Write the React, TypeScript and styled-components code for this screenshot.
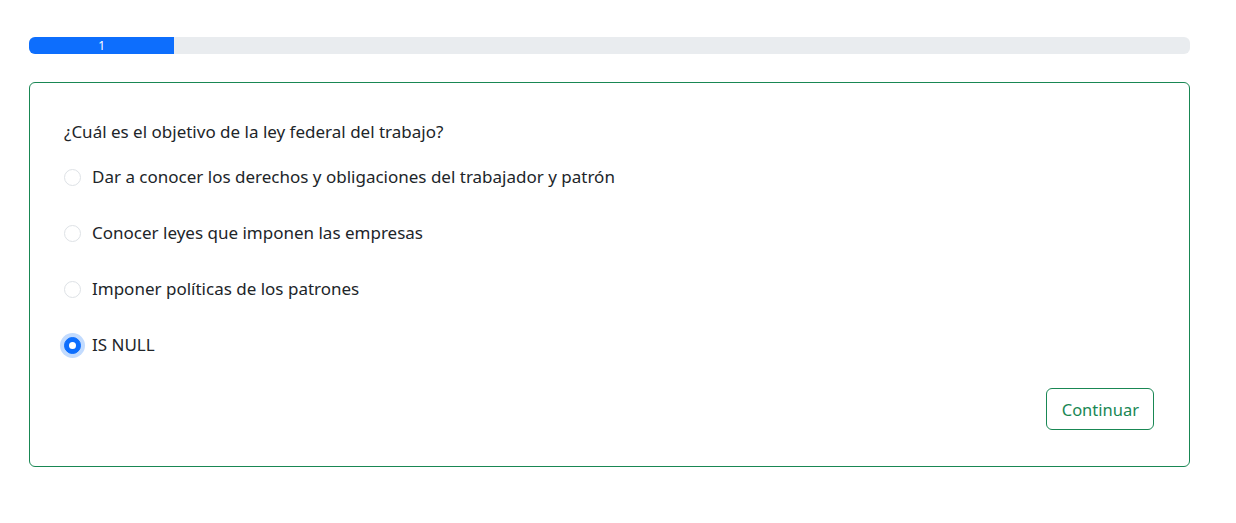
import React, { useState } from 'react'
import styled, { createGlobalStyle } from 'styled-components'

const GlobalStyle = createGlobalStyle`
  body {
    margin: 0;
    background: #fff;
    font-family: 'Noto Sans', 'Open Sans', sans-serif;
    color: #212529;
  }
`

const Page = styled.div`
  padding: 37px 46px 0 29px;
  display: flex;
  flex-direction: column;
  gap: 28px;
`

const Progress = styled.div`
  height: 17px;
  background: #e9ecef;
  border-radius: 6px;
  overflow: hidden;
  display: flex;
`

const ProgressFill = styled.div`
  background: #0d6efd;
  color: #fff;
  font-size: 12px;
  display: flex;
  align-items: center;
  justify-content: center;
`

const Card = styled.div`
  border: 1px solid #198754;
  border-radius: 6px;
  padding: 37px 35px 36px 34px;
  display: flex;
  flex-direction: column;
`

const Question = styled.p`
  margin: 0 0 11px;
  font-size: 17px;
  line-height: 24px;
`

const Option = styled.label`
  display: flex;
  align-items: center;
  gap: 11px;
  height: 24px;
  margin: 10px 0 22px;
  font-size: 17px;
  line-height: 24px;
  cursor: pointer;
`

const Radio = styled.span<{ $checked: boolean }>`
  width: 17px;
  height: 17px;
  flex: none;
  border-radius: 50%;
  box-sizing: border-box;
  border: ${p => (p.$checked ? '1px solid #0d6efd' : '1px solid #dee2e6')};
  background: ${p => (p.$checked ? '#0d6efd' : '#fff')};
  box-shadow: ${p => (p.$checked ? '0 0 0 4px rgba(13,110,253,.25)' : 'none')};
  display: flex;
  align-items: center;
  justify-content: center;
  &::after {
    content: '';
    width: 7px;
    height: 7px;
    border-radius: 50%;
    background: ${p => (p.$checked ? '#fff' : 'transparent')};
  }
`

const Footer = styled.div`
  display: flex;
  justify-content: flex-end;
  margin-top: 9px;
`

const OutlineButton = styled.button`
  font-family: inherit;
  font-size: 16.5px;
  color: #198754;
  background: #fff;
  border: 1px solid #198754;
  border-radius: 6px;
  height: 42px;
  padding: 0 14px 0 15px;
  cursor: pointer;
`

const options = [
  'Dar a conocer los derechos y obligaciones del trabajador y patrón',
  'Conocer leyes que imponen las empresas',
  'Imponer políticas de los patrones',
  'IS NULL',
]

const App: React.FC = () => {
  const [selected, setSelected] = useState(3)
  return (
    <Page>
      <GlobalStyle />
      <Progress>
        <ProgressFill style={{ width: '12.5%' }}>1</ProgressFill>
      </Progress>
      <Card>
        <Question>¿Cuál es el objetivo de la ley federal del trabajo?</Question>
        {options.map((o, i) => (
          <Option key={o} onClick={() => setSelected(i)}>
            <Radio $checked={selected === i} />
            {o}
          </Option>
        ))}
        <Footer>
          <OutlineButton>Continuar</OutlineButton>
        </Footer>
      </Card>
    </Page>
  )
}

export default App
